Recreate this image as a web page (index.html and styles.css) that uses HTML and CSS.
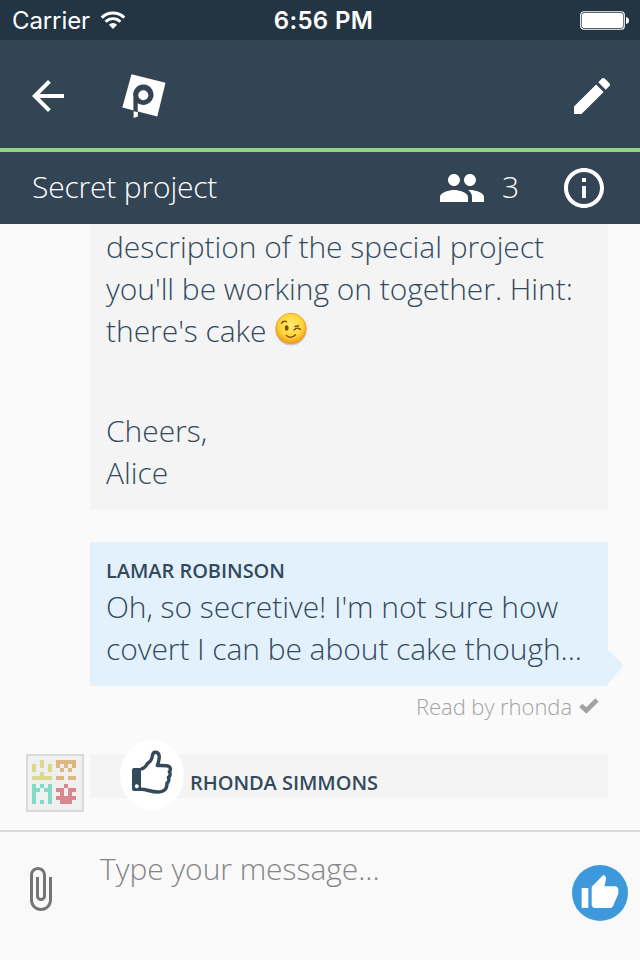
FILE: index.html
```
<!DOCTYPE html>
<html lang="en">
<head>
<meta charset="utf-8">
<title>Secret project</title>
<link rel="stylesheet" href="styles.css">
</head>
<body>
<div class="status">
  <span class="carrier">Carrier</span>
  <svg class="wifi" width="26" height="20" viewBox="0 0 26 20"><g fill="none" stroke="#fff" stroke-width="2.9"><path d="M1.7 7.6a16 16 0 0 1 22.6 0M5.6 11.7a10.5 10.5 0 0 1 14.8 0"/></g><path d="M13 19l-4.1-4.2a5.8 5.8 0 0 1 8.2 0z" fill="#fff"/></svg>
  <span class="time">6:56 PM</span>
  <svg class="battery" width="50" height="20" viewBox="0 0 50 20"><rect x=".75" y=".75" width="43.5" height="17.5" rx="3" fill="none" stroke="#fff" stroke-width="1.2"/><rect x="2" y="2" width="41" height="15" rx="2" fill="#fff"/><path d="M46 6q3 .5 3 3.5t-3 3.5z" fill="#fff"/></svg>
</div>
<header class="toolbar">
  <svg class="back" width="48" height="48" viewBox="0 0 24 24"><path fill="#fff" d="M20 11H7.83l5.59-5.59L12 4l-8 8 8 8 1.41-1.41L7.83 13H20v-2z"/></svg>
  <svg class="logo" width="46" height="46" viewBox="0 0 46 46"><path fill="#fff" d="M10.5 1.2L44.5 9.8 36.3 43.4 1.3 34.4z"/><path fill="#334454" d="M12.4 24a10.2 10.2 0 1 1 4.3 6.2V39l-4.3-1.3z"/><circle cx="22.3" cy="22.3" r="5" fill="#fff"/><path fill="#fff" d="M12.6 38.2l4.3 1v4.4l-4.3 1.3z"/></svg>
  <svg class="edit" width="48" height="48" viewBox="0 0 24 24"><path fill="#fff" d="M3 17.25V21h3.75L17.81 9.94l-3.75-3.75L3 17.25zM20.71 7.04c.39-.39.39-1.02 0-1.41l-2.34-2.34c-.39-.39-1.02-.39-1.41 0l-1.83 1.83 3.75 3.75 1.83-1.83z"/></svg>
</header>
<div class="room">
  <span class="room-name">Secret project</span>
  <svg class="people" width="48" height="48" viewBox="0 0 24 24"><path fill="#fff" d="M16 11c1.66 0 2.99-1.34 2.99-3S17.66 5 16 5s-3 1.34-3 3 1.34 3 3 3zm-8 0c1.66 0 2.99-1.34 2.99-3S9.66 5 8 5 5 6.34 5 8s1.34 3 3 3zm0 2c-2.33 0-7 1.17-7 3.5V19h14v-2.5c0-2.33-4.67-3.5-7-3.5zm8 0c-.29 0-.62.02-.97.05 1.16.84 1.97 1.97 1.97 3.45V19h6v-2.5c0-2.33-4.67-3.5-7-3.5z"/></svg>
  <span class="count">3</span>
  <svg class="info" width="48" height="48" viewBox="0 0 24 24"><path fill="#fff" d="M11 17h2v-6h-2v6zm1-15C6.48 2 2 6.48 2 12s4.48 10 10 10 10-4.48 10-10S17.52 2 12 2zm0 18c-4.41 0-8-3.59-8-8s3.59-8 8-8 8 3.59 8 8-3.59 8-8 8zM11 9h2V7h-2v2z"/></svg>
</div>
<main class="thread">
  <article class="bubble intro">
    <p>description of the special project<br>you'll be working on together. Hint:<br>there's cake <svg class="wink" width="34" height="34" viewBox="0 0 34 34"><defs><radialGradient id="face" cx=".5" cy=".4" r=".58"><stop offset="0" stop-color="#ffed70"/><stop offset=".65" stop-color="#ffd63b"/><stop offset="1" stop-color="#f59b18"/></radialGradient></defs><ellipse cx="17" cy="18" rx="15.7" ry="15.5" fill="#999" opacity=".45"/><circle cx="17" cy="16.5" r="15.2" fill="url(#face)" stroke="#ee971c" stroke-width=".8"/><ellipse cx="12.7" cy="16" rx="1.9" ry="2.8" fill="#7d4a0b"/><g fill="none" stroke="#85500d" stroke-width="1.5" stroke-linecap="round"><path d="M7.5 11.2q2-3 5-1.5M20 18q3-3 6.5-.7M21 14.5l3.5-.8M12.3 23.5q5 4 9.2-.8"/></g></svg></p>
    <p>Cheers,<br>Alice</p>
  </article>
  <article class="bubble own">
    <h2>LAMAR ROBINSON</h2>
    <p>Oh, so secretive! I'm not sure how<br>covert I can be about cake though...</p>
    <svg class="tail" width="16" height="38" viewBox="0 0 16 38"><path fill="#e3f1fc" d="M0 3L15.7 18.5 0 36.5z"/></svg>
  </article>
  <div class="receipt"><span>Read by rhonda</span><svg width="20" height="16" viewBox="0 0 20 16"><path fill="none" stroke="#a3a3a3" stroke-width="4.6" d="M1.8 7.3l5.5 5.2L18 2"/></svg></div>
  <div class="reaction">
    <svg class="avatar" width="58" height="58" viewBox="0 0 58 58"><rect x="1" y="1" width="56" height="56" fill="#f0f0f0" stroke="#dadada" stroke-width="2"/>
      <path fill="#dcd98a" d="M14 6h4v8h-4zM6 10h4v8H6zM22 10h4v8h-4zM14 18h4v4h8v4H6v-4h8z"/>
      <path fill="#deb681" d="M30 6h20v8h-4v4h-4v-4h4v-4h-4v4h-4v-4h-4v4h4v4h-4v-4h-4zM30 22h8v4h-8zM42 22h8v4h-8z"/>
      <path fill="#83dcc7" d="M6 30h4v4h4v4h-4v12H6zM14 30h4v4h-4zM22 30h4v20h-4V38h-4v-4h4zM14 46h4v4h-4z"/>
      <path fill="#dc878e" d="M38 30h4v4h-4zM30 34h8v8h4v-8h8v4h-4v4h4v4h-4v4H34v-4h-4v-4h4v-4h-4z"/></svg>
    <div class="strip"><span class="thumb"><svg width="44" height="46" viewBox="0 0 44 46"><path fill="#334a5d" fill-rule="evenodd" d="M4 18h7v23H4q-2-.2-2-2V20q0-2 2-2zm2.7 16.3a2 2 0 1 0 .1 0z"/><path fill="none" stroke="#334a5d" stroke-width="3.4" stroke-linejoin="round" d="M11 19q4-.7 6.5-5.5 4.5-3 4.8-7.5 .5-4 3.7-3.7 5.8 1 1.3 13.2 5-.2 9.5.2c4 .5 4.4 4.2 2.5 6 1.5 2.5.8 4.7-.9 5.6 1 2.5.1 5-1.5 6 .5 6.3-3.8 8.8-8.6 8.7-8 .1-11.3-2.8-17.3-2.7"/></svg></span><h2>RHONDA SIMMONS</h2></div>
  </div>
</main>
<footer class="composer">
  <svg class="clip" width="48" height="48" viewBox="0 0 24 24"><path fill="#757575" d="M16.5 6v11.5c0 2.21-1.79 4-4 4s-4-1.79-4-4V5c0-1.38 1.12-2.5 2.5-2.5s2.5 1.12 2.5 2.5v10.5c0 .55-.45 1-1 1s-1-.45-1-1V6H10v9.5c0 1.38 1.12 2.5 2.5 2.5s2.5-1.12 2.5-2.5V5c0-2.21-1.79-4-4-4S7 2.79 7 5v12.5c0 3.04 2.46 5.5 5.5 5.5s5.5-2.46 5.5-5.5V6h-1.5z"/></svg>
  <span class="placeholder">Type your message...</span>
  <span class="like"><svg width="40" height="40" viewBox="0 0 24 24"><path fill="#fff" d="M1 21h4V9H1v12zm22-11c0-1.1-.9-2-2-2h-6.31l.95-4.57.03-.32c0-.41-.17-.79-.44-1.06L14.17 1 7.59 7.59C7.22 7.95 7 8.45 7 9v10c0 1.1.9 2 2 2h9c.83 0 1.54-.5 1.84-1.22l3.02-7.05c.09-.23.14-.47.14-.73v-2z"/></svg></span>
</footer>
</body>
</html>
```
FILE: styles.css
```
* { box-sizing: border-box; }
body { margin: 0; width: 640px; height: 960px; overflow: hidden; display: flex; flex-direction: column; background: #fafafa; color: #334a5d; font-family: "Open Sans", sans-serif; font-weight: 300; font-size: 30px; line-height: 42px; letter-spacing: -.05px; }
svg { display: block; flex: none; }
p, h2 { margin: 0; white-space: nowrap; }
h2 { font-size: 20px; font-weight: 600; line-height: 28px; }
.status { height: 40px; flex: none; display: flex; align-items: center; background: #233443; color: #fff; font-family: Inter, sans-serif; font-size: 24px; line-height: 40px; padding: 2px 10px 0 12px; position: relative; }
.carrier { width: 78px; font-weight: 400; letter-spacing: -.1px; }
.wifi { margin: -2px 0 0 10px; }
.time { position: absolute; left: 0; right: 0; text-align: center; padding-left: 7px; font-weight: 600; letter-spacing: .35px; }
.battery { margin: 0 0 0 auto; }
.toolbar { height: 112px; flex: none; display: flex; align-items: center; padding: 4px 24px 0; background: #334454; border-bottom: 4px solid #92d280; }
.logo { margin: 0 0 0 49px; }
.edit { margin-left: auto; }
.room { height: 72px; flex: none; display: flex; align-items: center; padding: 0 32px; background: #334454; color: #fff; }
.room-name { margin-top: -2px; letter-spacing: -.18px; }
.people { margin-left: auto; }
.count { width: 17px; margin: -2px 41px 0 16px; }
.thread { flex: 1; min-height: 0; padding: 0 32px 0 90px; }
.bubble { position: relative; padding: 16px; border-radius: 2px; background: #f4f4f4; }
.intro { padding-top: 2px; height: 286px; border-radius: 0 0 2px 2px; }
.intro p + p { margin-top: 58px; }
.wink { display: inline-block; vertical-align: -4px; margin: -20px 0 0 0; }
.own { margin-top: 32px; padding-top: 15px; height: 144px; background: #e3f1fc; }
.own p { margin-top: 1px; letter-spacing: -.07px; }
.tail { position: absolute; left: 100%; bottom: 1px; }
.receipt { display: flex; justify-content: flex-end; align-items: center; height: 39px; padding-right: 9px; gap: 7px; color: #a3a3a3; font-size: 22px; }
.reaction { display: flex; margin: 29px 0 0 -64px; }
.strip { flex: 1; height: 44px; margin-left: 6px; padding-left: 30px; display: flex; background: #f4f4f4; border-radius: 2px; }
.strip h2 { margin: 15px 0 0 6px; }
.thumb { width: 64px; height: 70px; margin-top: -14px; padding-bottom: 4px; border-radius: 50%; background: #fff; display: grid; place-items: center; }
.composer { height: 130px; flex: none; display: flex; align-items: flex-start; padding: 0 12px 0 16px; border-top: 2px solid #dadada; background: #f9f9f9; color: #858585; }
.clip { margin-top: 33px; }
.placeholder { margin: 16px auto 0 36px; }
.like { width: 56px; height: 56px; margin-top: 33px; border-radius: 50%; background: #3d99dc; display: grid; place-items: center; }
```
